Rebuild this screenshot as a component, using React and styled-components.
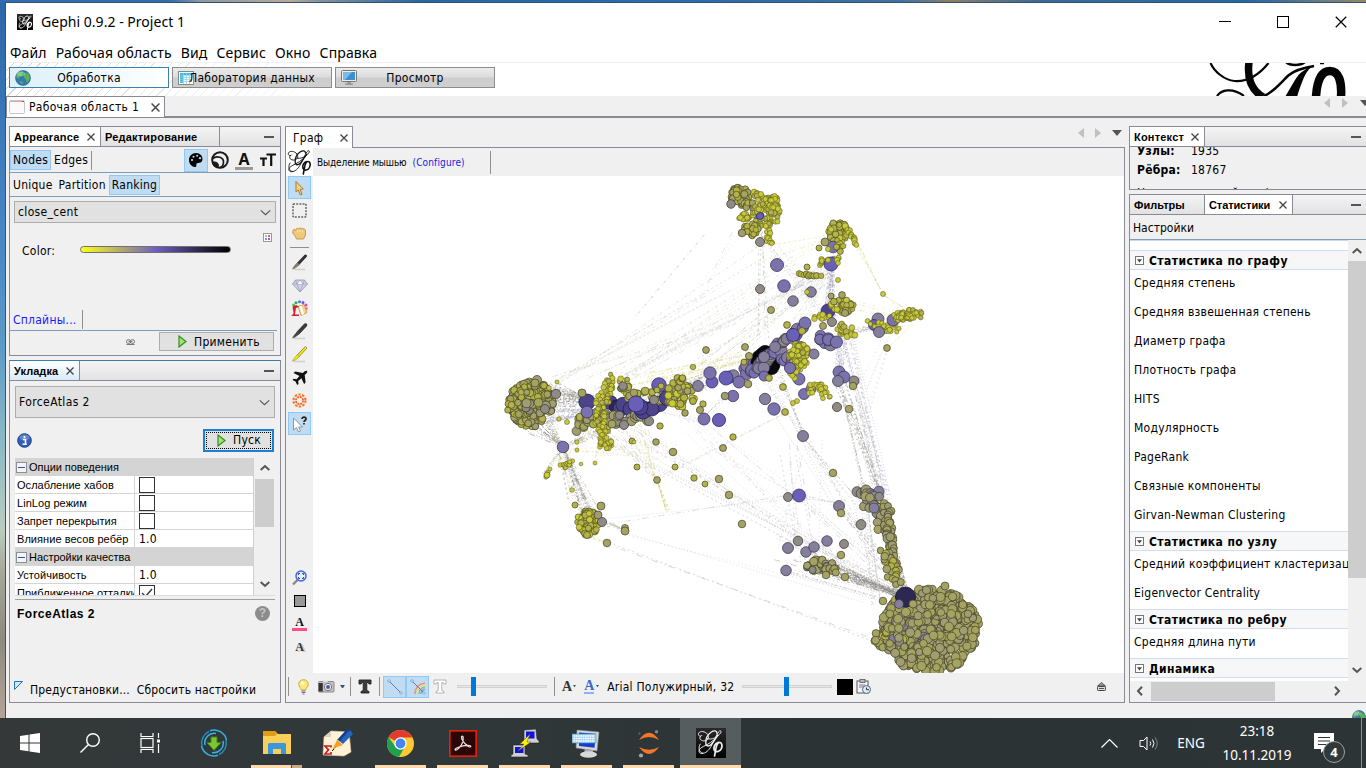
import React from 'react';
import styled, { createGlobalStyle, css } from 'styled-components';

const TAHOMA = '"DejaVu Sans Condensed", "DejaVu Sans", sans-serif';
const SEGOE = '"Noto Sans", "Open Sans", sans-serif';
const ARIAL = '"Liberation Sans", Arial, sans-serif';
const LINE = '#8a8a94';
const BLUE_LINE = '#7f9db9';
const FACE = '#f0f0f0';

const Global = createGlobalStyle`
  *, *::before, *::after { box-sizing: border-box; }
  body { margin: 0; overflow: hidden; }
  svg { display: block; flex: none; }
`;

/* ---------- primitives ---------- */

const Text = styled.span`
  font-family: ${TAHOMA};
  font-size: ${p => p.$size || 12}px;
  letter-spacing: ${p => p.$ls ?? 0.25}px;
  font-weight: ${p => (p.$bold ? 700 : 400)};
  color: ${p => p.$color || '#000'};
  line-height: 16px;
  white-space: nowrap;
`;
const SegoeText = styled(Text)`
  font-family: ${SEGOE};
  letter-spacing: ${p => p.$ls || 0}px;
`;
const ArialText = styled(Text)`
  font-family: ${ARIAL};
  letter-spacing: ${p => p.$ls ?? 0.05}px;
`;
const Grow = styled.div`flex: 1;`;

/* ---------- window frame ---------- */

const Desktop = styled.div`
  width: 1366px;
  height: 768px;
  overflow: hidden;
  display: flex;
  flex-direction: column;
  background:
    linear-gradient(90deg, #2f6db0 0 170px, #8c98a0 200px, #b8a99a 290px, #86909c 320px, #2567a6 420px, #2b6bb0 700px, #41729f 900px, #8a7d6a 950px, #3b6b98 1040px, #2468a8 1250px, #93886a 1366px) top / 100% 3px no-repeat,
    linear-gradient(#2b67a8 0, #3a78bb 120px, #4b89c6 260px, #5d9bc8 350px, #86b6c6 430px, #b9cdbf 530px, #a7a89a 570px, #8d8a80 640px, #b3a596 718px);
`;
const Window = styled.div`
  margin: 2px 0 0 5px;
  height: 716px;
  width: 1361px;
  flex: none;
  border-top: 1px solid #33506e;
  border-left: 1px solid #4a4f58;
  background: ${FACE};
  display: flex;
  flex-direction: column;
`;
const TitleBar = styled.div`
  height: 39px;
  background: #fff;
  display: flex;
  align-items: center;
  padding: 0 18px 1px 11px;
  gap: 8px;
`;
const Controls = styled.div`
  display: flex;
  gap: 46px;
  align-items: center;
  margin-right: 1px;
`;
const MenuBar = styled.div`
  height: 21px;
  background: #fff;
  border-bottom: 1px solid #f0f0f0;
  display: flex;
  align-items: center;
  gap: 9px;
  padding: 1px 0 0 4px;
`;
const Banner = styled.div`
  height: 33px;
  background:
    linear-gradient(90deg, rgba(255,255,255,0), #fff 330px),
    repeating-linear-gradient(135deg, #fff 0 5.4px, #d4d4d4 5.4px 6.2px);
  display: flex;
  align-items: flex-start;
  padding: 4px 12px 0 3px;
  gap: 3px;
`;
const ModeButton = styled.div`
  width: 160px;
  height: 21px;
  border: 1px solid ${p => (p.$on ? '#3c7fb1' : '#8b8b90')};
  background: ${p => (p.$on
    ? 'linear-gradient(90deg, #ddf0f9, #eef9fe 60%, #fff)'
    : 'linear-gradient(#ececec, #dcdcdc 48%, #cdcdcd 52%, #cfcfcf)')};
  display: grid;
  align-items: center;
  padding: 0 5px;
  text-align: center;
  & > * { grid-area: 1 / 1; }
`;
const LogoBox = styled.div`
  height: 33px;
  margin-top: -4px;
`;
const WorkspaceTabs = styled.div`
  height: 22px;
  border-bottom: 2px solid ${LINE};
  display: flex;
  align-items: flex-start;
`;
const WorkspaceTab = styled.div`
  width: 159px;
  height: 21px;
  background: #fff;
  border: 1px solid ${LINE};
  border-bottom: 0;
  display: flex;
  align-items: center;
  padding: 0 4px 0 2px;
  gap: 4px;
`;
const Arrows = styled.div`
  display: flex;
  align-items: center;
  gap: ${p => (p.$wide ? 12 : 11)}px;
  height: 14px;
  margin-right: ${p => (p.$wide ? -4 : 0)}px;
`;
const Body = styled.div`
  flex: 1;
  display: grid;
  grid-template-columns: 272px 840px 244px;
  column-gap: 4px;
  padding: 8px 0 0 3px;
  height: 600px;
`;
const Column = styled.div`
  display: flex;
  flex-direction: column;
  gap: 4px;
  min-width: 0;
`;

/* ---------- panels ---------- */

const Panel = styled.section`
  height: ${p => p.$h}px;
  border: 1px solid ${LINE};
  ${p => p.$active && css`border-top-color: #3f7cad;`}
  display: flex;
  flex-direction: column;
  overflow: hidden;
`;
const TabStrip = styled.div`
  height: 20px;
  flex: none;
  border-bottom: 1px solid ${LINE};
  background: linear-gradient(#f4f4f4, #e2e2e4);
  display: flex;
`;
const Tab = styled.div`
  width: ${p => p.$w}px;
  border-right: 1px solid ${LINE};
  background: ${p => (p.$on ? (p.$focus ? 'linear-gradient(#fff, #d9ebf9)' : '#fff') : 'transparent')};
  display: flex;
  align-items: center;
  justify-content: space-between;
  padding: 1px 5px 0 4px;
`;
const MinButton = styled.div`
  margin: 9px ${p => p.$right || 6}px 0 auto;
  width: 10px;
  height: 2px;
  background: #555;
`;
const ToolRow = styled.div`
  height: ${p => p.$h}px;
  flex: none;
  border-bottom: 1px solid ${BLUE_LINE};
  display: flex;
  align-items: center;
  padding: ${p => p.$pad || '1px 0 0'};
`;
const Chip = styled.div`
  height: 20px;
  padding: 0 2px;
  display: flex;
  align-items: center;
  justify-content: center;
  border: 1px solid ${p => (p.$on ? '#90c8f6' : 'transparent')};
  background: ${p => (p.$on ? '#c0dcf3' : 'transparent')};
  ${p => p.$w && css`width: ${p.$w}px; height: ${p.$h || 23}px; padding: 0;`}
`;
const VLine = styled.div`
  width: 1px;
  height: ${p => p.$h || 19}px;
  background: #8f8f8f;
`;
const Select = styled.div`
  height: ${p => p.$h}px;
  margin: ${p => p.$m};
  border: 1px solid #adadad;
  background: #e1e1e1;
  display: flex;
  align-items: center;
  justify-content: space-between;
  padding: 0 4px 0 3px;
`;
const RankingArea = styled.div`
  display: flex;
  align-items: flex-start;
  padding: 10px 8px 0 12px;
  height: 86px;
`;
const ColorLabel = styled(Text)`margin-top: 10px;`;
const GradientBar = styled.div`
  width: 151px;
  height: 7px;
  margin: 13px 0 0 25px;
  border: 1px solid #707070;
  border-radius: 4px;
  background: linear-gradient(90deg, #ffff14, #6f5fc0 50%, #000);
`;
const SplineRow = styled.div`
  height: 22px;
  border-bottom: 1px solid ${BLUE_LINE};
  margin-right: 3px;
  padding-left: 3px;
  display: flex;
  align-items: center;
  gap: 5px;
`;
const ApplyRow = styled.div`
  display: flex;
  align-items: center;
  justify-content: flex-end;
  gap: 24px;
  padding: 1px 6px 0 0;
`;
const PushButton = styled.div`
  width: ${p => p.$w}px;
  height: ${p => p.$h}px;
  border: ${p => (p.$focus ? '2px solid #1b7fd4' : '1px solid #adadad')};
  background: #e1e1e1;
  display: flex;
  align-items: center;
  justify-content: center;
  gap: 7px;
  padding-left: ${p => (p.$focus ? 1 : 5)}px;
  ${p => p.$focus && css`outline: 1px dotted #000; outline-offset: -4px;`}
`;
const RunRow = styled.div`
  height: 40px;
  padding: 4px 6px 0 7px;
  display: flex;
  align-items: center;
  justify-content: space-between;
`;
const PropSheet = styled.div`
  margin: 0 5px;
  height: 138px;
  flex: none;
  display: flex;
  overflow: hidden;
  border-bottom: 1px solid #ddd;
`;
const PropRows = styled.div`width: 239px; border-right: 1px solid #d0d0d0;`;
const PropHead = styled.div`
  height: 18px;
  background: #d4d4d4;
  display: flex;
  align-items: center;
  gap: 2px;
  padding-left: 1px;
`;
const PropRow = styled.div`
  height: 18px;
  background: #fff;
  border-bottom: 1px solid #d4d4d4;
  display: grid;
  grid-template-columns: 120px 1fr;
`;
const PropCell = styled.div`
  padding-left: ${p => (p.$value ? 4 : 2)}px;
  border-right: ${p => (p.$value ? 0 : 1)}px solid #d4d4d4;
  overflow: hidden;
  display: flex;
  align-items: center;
`;
const Check = styled.div`
  width: 16px;
  height: 16px;
  border: 1px solid #333;
  background: #fff;
`;
const Collapse = styled.div`
  width: 11px;
  height: 11px;
  border: 1px solid #8a8f98;
  background: #f3f4f6;
  display: flex;
  align-items: center;
  justify-content: center;
  &::after { content: ''; width: 7px; height: 1px; background: #35559a; }
`;
const VScroll = styled.div`
  width: ${p => p.$w}px;
  background: ${FACE};
  display: flex;
  flex-direction: column;
  align-items: center;
  justify-content: space-between;
  padding: ${p => p.$pad};
`;
const Thumb = styled.div`
  align-self: stretch;
  height: ${p => p.$h}px;
  background: #cdcdcd;
  margin-bottom: auto;
  margin-top: ${p => p.$mt}px;
`;
const Description = styled.div`
  margin: 3px 5px 0;
  border-top: 1px solid #a0a0a0;
  padding: 6px 5px 0 2px;
  display: flex;
  align-items: flex-start;
  justify-content: space-between;
  height: 82px;
`;
const FooterLinks = styled.div`
  display: flex;
  align-items: flex-start;
  padding: 0 4px;
  gap: 7px;
  & > span { padding-top: 1px; }
`;

/* ---------- graph ---------- */

const GraphTabs = styled.div`
  height: 22px;
  display: flex;
`;
const GraphTab = styled.div`
  width: 68px;
  height: 22px;
  border: 1px solid ${LINE};
  border-bottom: 0;
  background: #fff;
  display: flex;
  align-items: center;
  justify-content: space-between;
  padding: 0 4px 0 7px;
`;
const GraphTabRest = styled.div`
  flex: 1;
  border-bottom: 1px solid ${LINE};
  display: flex;
  justify-content: flex-end;
  padding-right: 3px;
`;
const GraphFrame = styled.div`
  height: 555px;
  border: 1px solid ${LINE};
  border-top: 0;
  display: flex;
  flex-direction: column;
`;
const GraphTop = styled.div`
  height: 28px;
  display: flex;
  align-items: center;
  & > span { padding-top: 1px; }
`;
const GraphMiddle = styled.div`
  display: flex;
  height: 497px;
`;
const Tools = styled.div`
  width: 27px;
  display: flex;
  flex-direction: column;
  align-items: center;
  padding-bottom: 15px;
`;
const Tool = styled.div`
  width: 23px;
  height: 23px;
  flex: none;
  display: flex;
  align-items: center;
  justify-content: center;
  ${p => p.$on && css`background: #c0dcf3; border: 1px solid #90c8f6;`}
`;
const ToolRule = styled.div`
  width: 19px;
  height: 1px;
  margin: 2px 0 3px;
  background: #909090;
`;
const LogoTile = styled.div`
  width: 27px;
  height: 28px;
  background: #fff;
  display: flex;
  align-items: center;
  justify-content: center;
`;
const BottomTools = styled.div`
  flex: 1;
  display: flex;
  align-items: center;
  padding: 0 18px 2px 2px;
`;
const Gap = styled.div`width: ${p => p.$w}px; flex: none;`;
const Slider = styled.div`
  width: ${p => p.$w}px;
  height: 3px;
  border: 1px solid #d2d2d2;
  background: #e7e7e7;
  display: flex;
  align-items: center;
`;
const Knob = styled.div`
  width: 5px;
  height: 19px;
  margin-left: ${p => p.$at}px;
  background: #0078d7;
  flex: none;
`;
const Swatch = styled.div`width: 16px; height: 16px; background: #000;`;

/* ---------- right column ---------- */

const ContextBody = styled.div`
  display: flex;
  flex-direction: column;
  padding-left: 7px;
`;
const ContextRow = styled.div`
  display: grid;
  grid-template-columns: 54px 1fr;
  height: 16px;
  flex: none;
  margin-top: 7px;
  ${p => p.$cut && css`height: 8px; margin-top: 0; overflow: hidden; align-content: center;`}
`;
const ContextTail = styled.div`padding-top: 5px;`;
const StatsBody = styled.div`
  flex: 1;
  display: grid;
  grid-template-columns: 218px 18px;
  grid-template-rows: 441px 20px;
`;
const StatList = styled.div`
  background: #fff;
  border-top: 1px solid #c9d7f1;
  padding-top: 9px;
  overflow: hidden;
`;
const StatHead = styled.div`
  height: 20px;
  background: #f7f7f7;
  border-top: 1px solid #d3dcf5;
  border-bottom: 1px solid #d3dcf5;
  display: flex;
  align-items: center;
  gap: 5px;
  padding: 1px 0 0 5px;
`;
const StatItem = styled.div`
  height: 29px;
  padding: 3px 0 0 4px;
`;
const HScroll = styled.div`
  display: flex;
  align-items: center;
  justify-content: space-between;
  padding: 0 6px 0 5px;
`;
const HThumb = styled.div`
  width: 124px;
  height: 19px;
  background: #cdcdcd;
  margin: 0 auto 0 6px;
`;
const StatusBar = styled.div`
  height: 15px;
  display: flex;
  justify-content: flex-end;
  overflow: hidden;
  padding-top: 7px;
`;

/* ---------- taskbar ---------- */

const Taskbar = styled.footer`
  height: 50px;
  flex: none;
  background: linear-gradient(90deg, #343839, #30383a 30%, #2b3335 60%, #2d3436);
  display: flex;
`;
const TaskItem = styled.div`
  width: ${p => p.$w}px;
  height: 50px;
  flex: none;
  display: flex;
  align-items: center;
  justify-content: center;
  background: ${p => (p.$on ? '#565d5f' : 'transparent')};
  border-bottom: 3px solid ${p => (p.$run ? '#ffd9ae' : 'transparent')};
  padding-top: 3px;
  margin-right: ${p => p.$mr || 0}px;
`;
const StackEdge = styled.div`
  width: 11px;
  height: 3px;
  margin: 47px 10px 0 -11px;
  background: #c9aa89;
  border-left: 1px solid #444;
`;
const Clock = styled.div`
  display: flex;
  flex-direction: column;
  align-items: center;
  gap: 8px;
  width: 74px;
  padding-top: 5px;
`;
const Bell = styled.div`
  position: relative;
  width: 34px;
  height: 32px;
  margin-top: 14px;
`;
const Badge = styled.div`
  position: absolute;
  left: 9px;
  top: 9px;
  width: 22px;
  height: 22px;
  border: 1px solid #9ba0a2;
  border-radius: 50%;
  background: #30383a;
  display: flex;
  align-items: center;
  justify-content: center;
`;

/* ---------- icons ---------- */

const Close = ({ s = 8, c = '#444', w = 1.3 }) => (
  <svg width={s} height={s} viewBox="0 0 8 8"><path d="M.5.5l7 7M7.5.5l-7 7" stroke={c} strokeWidth={w} fill="none" /></svg>
);
const Chevron = ({ dir = 'down', w = 10, c = '#555', sw = 2 }) => {
  const r = { down: 0, up: 180, left: 90, right: -90 }[dir];
  return (
    <svg width={w} height={w} viewBox="0 0 10 10">
      <path d="M.7 3l4.3 4 4.3-4" transform={`rotate(${r} 5 5)`} stroke={c} strokeWidth={sw} fill="none" />
    </svg>
  );
};
const GephiMark = ({ size = 26, c = '#111', w = 0.9 }) => (
  <svg width={size} height={size} viewBox="0 0 26 26" fill="none" stroke={c} strokeWidth={w} strokeLinecap="round">
    <path d="M4.500 6C3.500 7.500 1 6.500 1.300 4.500 1.800 2 6 1.500 9 4c3 2.500 2 6.500-1.500 7S1 9 3.500 6.500" />
    <path d="M18.500 4C18.500 1.500 16 1 13 3 9.500 5.500 7.800 10 8.200 13.500c.3 3 3.300 3 5.800 0 2.200-2.700 4-6 5.500-8" strokeWidth={w * 1.4} />
    <path d="M9.500 9c4 1.500 10-1.500 12.500-5.500 1-2-.5-2.500-2-.8-2 3-4.500 9-7 13.500-2 3.700-5 6.500-8.500 6.500-3 0-3.500-3-1-5s8-3.500 12-7.500" />
    <path d="M3 14c-2 3-1.500 8 2.500 8.500" />
    <path d="M19.500 12.500c-3 1-4.500 4.500-3.500 7 1.200 2.500 5 2 6.500-1 1.500-3.200.5-6-1.500-6s-3 3-3.600 6.500L16.300 25" strokeWidth={w * 1.8} />
  </svg>
);
const BigLogo = () => (
  <svg width="146" height="33" viewBox="1208 63 146 33" fill="none" stroke="#050505">
    <path d="M1210.500 63c4 9 14 17 24 18 15 1 26-8 34-18" strokeWidth="2.200" />
    <path d="M1249 62c-2 16 2 28 14 35" strokeWidth="7.500" />
    <path d="M1217 96c4-6 15-9 27 0" strokeWidth="2.200" />
    <path d="M1264 96c10-4 18-15 25-21 6-5 13-7 25-9" strokeWidth="2.500" />
    <path d="M1285 97l10-17c5-8 10-11 18-14-6 4-9 9-16 31z" fill="#050505" stroke="none" />
    <path d="M1286 62c4 4 14 4 19 0" strokeWidth="2.500" />
    <path d="M1320 63l4 0" strokeWidth="2.500" />
    <path d="M1316 97c1-17 6-26 14-26 9 0 12 11 11 26" strokeWidth="8.500" />
  </svg>
);
const NavArrows = ({ wide }) => (
  <Arrows $wide={wide}>
    <svg width="6" height="10" viewBox="0 0 6 10"><path d="M6 0v10L0 5z" fill="#c0c0c0" /></svg>
    <svg width="6" height="10" viewBox="0 0 6 10"><path d="M0 0v10l6-5z" fill="#c0c0c0" /></svg>
    <svg width="10" height="6" viewBox="0 0 10 6"><path d="M0 0h10L5 6z" fill="#555" /></svg>
  </Arrows>
);
const Globe = ({ s = 16 }) => (
  <svg width={s} height={s} viewBox="0 0 16 16">
    <circle cx="8" cy="8" r="7.500" fill="#3478b8" stroke="#285d91" strokeWidth=".6" />
    <path d="M2 4c2-2 4-3 6-2.500 1 1-1 2-1 3.500S4 6 4 8 1.500 8 1 6zM9 3c3-1 5 1 5.500 3 1 2-.5 5-2 6.500-1.500 0-1-3-2.500-4S9 5 9 3zM5 11c2-.5 3 1 3 3-2 .5-3-1-3-3z" fill="#56b54c" />
    <ellipse cx="6" cy="4" rx="4" ry="2.500" fill="#fff" opacity=".3" />
  </svg>
);
const TableIcon = () => (
  <svg width="16" height="16" viewBox="0 0 16 16">
    <rect x=".5" y="1.500" width="15" height="13" fill="#fff" stroke="#888" />
    <path d="M2 3h12v2H2zM2 3h3v10H2z" fill="#38bce8" />
    <path d="M2 5.500h12M2 7.500h12M2 9.500h12M2 11.500h12M5.500 3v11M8.500 3v11M11.500 3v11" stroke="#8ccfe6" strokeWidth=".7" />
  </svg>
);
const MonitorIcon = () => (
  <svg width="16" height="15" viewBox="0 0 16 15">
    <rect x=".5" y=".5" width="15" height="11" rx="1" fill="#eee" stroke="#777" />
    <rect x="2" y="2" width="12" height="8" fill="#3b8ed0" />
    <path d="M2 2h9L4 10H2z" fill="#7bbbe8" />
    <path d="M6 12h4v1.500h2V15H4v-1.500h2z" fill="#999" />
  </svg>
);
const PageIcon = () => (
  <svg width="16" height="14" viewBox="0 0 16 14">
    <rect x=".5" y=".5" width="15" height="13" rx="1" fill="#fbf9f9" stroke="#c8c6c6" />
    <path d="M1 1.500h14" stroke="#d9a9ae" /><path d="M13 1.500h2" stroke="#d33" />
  </svg>
);
const Palette = () => (
  <svg width="14" height="14" viewBox="0 0 14 14">
    <path d="M7 0C3 0 0 3 0 7s3 7 6 7c2 0 1-2 1.500-3.200S10 10 11.500 9.500C15 8 14 0 7 0z" fill="#050505" />
    <g fill="#c0dcf3"><circle cx="3" cy="7" r="1.100" /><circle cx="4.500" cy="3.700" r="1" /><circle cx="8.200" cy="2.800" r="1" /><circle cx="11" cy="5.200" r="1.100" /></g>
  </svg>
);
const Rings = () => (
  <svg width="18" height="18" viewBox="0 0 18 18" fill="none" stroke="#1a1a1a">
    <circle cx="9" cy="9" r="7.800" strokeWidth="2" />
    <path d="M1.500 7.500C6 4 13 6.500 12.500 11.500c-.2 2.500-1.500 4.500-4 5.300" strokeWidth="1.700" />
    <path d="M1 11c3.500-1.500 7 .5 7 3.500 0 1.200-.8 2-2 2.500-2.500-.5-5-3-5-6z" fill="#1a1a1a" stroke="none" />
  </svg>
);
const SizeT = () => (
  <svg width="16" height="14" viewBox="0 0 16 14" fill="none" stroke="#111" strokeWidth="2.200">
    <path d="M6.500 1.500H16M11.200 1.500V13M0 5.500h7M3.500 5.500V13" />
  </svg>
);
const LetterBar = styled.div`
  width: ${p => p.$w || 18}px;
  height: ${p => p.$w || 19}px;
  display: flex;
  justify-content: center;
  align-items: flex-start;
  border-bottom: ${p => p.$bar};
  font: 700 ${p => p.$size || 18}px/${p => p.$lh || 16}px ${p => p.$font || SEGOE};
  color: #111;
`;
const Play = () => (
  <svg width="9" height="13" viewBox="0 0 9 13">
    <path d="M1 1v11l7-5.500z" fill="#a7e07a" stroke="#2f8f1c" strokeWidth="1.200" />
  </svg>
);
const Dice = () => (
  <svg width="9" height="9" viewBox="0 0 9 9">
    <rect x=".5" y=".5" width="8" height="8" fill="#fff" stroke="#999" />
    <path d="M2 2h2v2H2z" fill="#9c9" /><path d="M5 2h2v2H5z" fill="#e45a5a" /><path d="M2 5h2v2H2z" fill="#6b9ef0" /><path d="M5 5h2v2H5z" fill="#c44bd0" />
  </svg>
);
const Chain = () => (
  <svg width="9" height="6" viewBox="0 0 9 6" fill="none" stroke="#777">
    <rect x=".5" y=".8" width="4.200" height="3.500" rx="1.500" /><rect x="4.300" y=".8" width="4.200" height="3.500" rx="1.500" /><path d="M2.500 2.600h4M.5 5.500h8" />
  </svg>
);
const Info = () => (
  <svg width="15" height="15" viewBox="0 0 15 15">
    <circle cx="7.500" cy="7.500" r="6.800" fill="#2f5fb8" stroke="#1c3f86" />
    <ellipse cx="7.500" cy="4.500" rx="5" ry="3" fill="#fff" opacity=".25" />
    <path d="M6 6.500h2.500v4.500M5.500 11.200h4.300M7.500 3v2" stroke="#fff" strokeWidth="1.600" fill="none" />
  </svg>
);
const CornerMark = () => (
  <svg width="9" height="9" viewBox="0 0 9 9"><path d="M.5.5h8l-8 8z" fill="#cfe7f7" stroke="#2274b5" /></svg>
);
const CursorIcon = ({ help }) => (
  <svg width="16" height="16" viewBox="0 0 16 16">
    {help
      ? <><path d="M1.500 2v12l3-2.500L6.500 16l2-1-1.800-4h3.800z" fill="#fff" stroke="#8a96a2" /><path d="M10 3c0-2.500 4-2.500 4 0 0 1.500-2 1.500-2 3M12 7v1.500" stroke="#222" strokeWidth="1.700" fill="none" /></>
      : <path d="M4 1.500v10.500l2.300-2 2 5 1.800-.8-2-4.700 3.200-.5z" fill="#f5d07a" stroke="#a67d35" />}
  </svg>
);
const Marquee = () => (
  <svg width="15" height="15" viewBox="0 0 15 15"><rect x="1" y="1" width="13" height="13" fill="none" stroke="#222" strokeDasharray="2 1.200" /></svg>
);
const Hand = () => (
  <svg width="15" height="13" viewBox="0 0 15 13">
    <path d="M1 3c1.500-1 2.500-.5 3 .5C4 1 6 .5 7 2c1-1.500 3-1 3 0 1.500-.5 3 0 3.500 1.500V8l-2 4H4.500L3 8.500.8 6.500z" fill="#efc978" stroke="#c09240" strokeWidth=".9" />
    <path d="M5.500 3v2M8 3v2M10.500 3.500v2" stroke="#fff0c0" strokeWidth=".8" />
  </svg>
);
const Stroke = ({ body, tip, w = 3 }) => (
  <svg width="17" height="17" viewBox="0 0 17 17">
    <path d="M3 15.500h11" stroke="#d0d0d0" strokeWidth="1.500" />
    <path d="M14.500 2L7 10" stroke="#333" strokeWidth={w + 0.4} strokeLinecap="round" />
    <path d="M14.500 2L7 10" stroke={body} strokeWidth={w} strokeLinecap="round" />
    <path d="M6.500 8.500l2 2C6 13 4 14.500 1.500 15.200c.6-2.200 2.500-4.200 5-6.700z" fill={tip} stroke="#666" strokeWidth=".4" />
  </svg>
);
const Diamond = () => (
  <svg width="16" height="14" viewBox="0 0 16 14">
    <path d="M3.500 1h9L15.500 5 8 13 .5 5z" fill="#cfd2e6" stroke="#9094b3" strokeWidth=".8" />
    <path d="M.5 5h15M5 5l3 8 3-8M3.500 1L5 5l3-4 3 4 1.500-4" fill="none" stroke="#9a9ebd" strokeWidth=".7" />
    <path d="M5.500 5h5L8 1.500z" fill="#f5f6ff" />
  </svg>
);
const Bucket = () => (
  <svg width="17" height="17" viewBox="0 0 17 17">
    <g><circle cx="5" cy="2.700" r="1.500" fill="#26b04a" /><circle cx="8.500" cy="1.800" r="1.500" fill="#3a7be0" /><circle cx="12" cy="2.500" r="1.500" fill="#7c4be0" /><circle cx="15" cy="5" r="1.500" fill="#d048c8" /><circle cx="15.500" cy="8.500" r="1.300" fill="#ef6a9c" /><circle cx="2.500" cy="5" r="1.500" fill="#42cf55" /></g>
    <path d="M7 6.500l6-2 3 8-6 3z" fill="#f6d38c" stroke="#b98730" strokeWidth=".7" />
    <path d="M8 6.500l2.500-1 2.500 8.500-2 1z" fill="#fff" />
    <path d="M1.500 7C3 4.500 7 5 8 7L5 8l-1 6.500h4V16H.5c0-1.500 2-1 2-3.500z" fill="#d5252c" />
  </svg>
);
const Plane = () => (
  <svg width="16" height="16" viewBox="0 0 16 16">
    <path d="M15 1.200c-1.200-1-2.700.3-4 1.700L3.300 1.600 1.500 3l6 3-3 3.200-3-.4-1 1.200 3 1.600L5.200 15l1.300-1-.3-3 3.200-2.800 2.700 5.800 1.500-1.600L12.700 5c1.400-1.300 3.300-2.900 2.300-3.800z" fill="#111" />
  </svg>
);
const Gear = () => (
  <svg width="15" height="15" viewBox="0 0 15 15" fill="none">
    <circle cx="7.500" cy="7.500" r="6" stroke="#f47a30" strokeWidth="2.200" strokeDasharray="2.400 1.370" />
    <circle cx="7.500" cy="7.500" r="3.600" stroke="#f05a1a" strokeWidth="1.600" strokeDasharray="2 .8" />
  </svg>
);
const ZoomFit = () => (
  <svg width="15" height="16" viewBox="0 0 15 16">
    <path d="M6 9.500l-5 5" stroke="#8a8a8a" strokeWidth="2.400" />
    <circle cx="9" cy="6" r="5" fill="#e5edff" stroke="#3f68d6" strokeWidth="1.500" />
    <path d="M6.500 5V3.500H8M10 3.500h1.500V5M11.500 7v1.500H10M8 8.500H6.500V7" stroke="#2448c0" fill="none" />
  </svg>
);
const SquareIcon = () => (
  <svg width="12" height="12" viewBox="0 0 12 12"><rect x=".5" y=".5" width="11" height="11" fill="#999" stroke="#000" /></svg>
);
const Bulb = () => (
  <svg width="11" height="16" viewBox="0 0 11 16">
    <path d="M5.500.7C2.500.7.700 3 .700 5.200.7 8 3 8.500 3.300 11h4.400C8 8.500 10.300 8 10.300 5.200 10.300 3 8.500.7 5.500.7z" fill="#fbe87a" stroke="#c9a536" strokeWidth=".9" />
    <path d="M3.500 12h4M3.500 13.500h4M4.500 15h2" stroke="#777" strokeWidth="1.200" />
    <ellipse cx="4.500" cy="4" rx="1.800" ry="2" fill="#fff" opacity=".8" />
  </svg>
);
const Camera = () => (
  <svg width="17" height="13" viewBox="0 0 17 13">
    <rect x=".5" y="1.500" width="15.500" height="10.500" rx="1" fill="#c4c4c4" stroke="#888" />
    <rect x=".8" y="3" width="4" height="8.500" fill="#333" />
    <path d="M5 .5h5v1.500H5z" fill="#ddd" /><circle cx="10" cy="7" r="3.700" fill="#eee" stroke="#777" /><circle cx="10" cy="7" r="2" fill="#4a5d9c" />
  </svg>
);
const EdgeIcon = ({ rainbow }) => (
  <svg width="16" height="16" viewBox="0 0 16 16" fill="none">
    {rainbow && <><path d="M5 15C5 9 9 5 15 4" stroke="#ef8d91" strokeWidth="1.600" /><path d="M7 15c0-5 3-8 8-9" stroke="#f0df79" strokeWidth="1.600" /><path d="M9 15c0-4 2-6 6-7" stroke="#7fce89" strokeWidth="1.600" /><path d="M11 15c0-3 1.500-4 4-5" stroke="#8f9ee8" strokeWidth="1.600" /></>}
    <path d="M2 2l12 12" stroke="#587fb4" /><circle cx="2" cy="2" r="1.200" fill="#fff" stroke="#5b88c0" strokeWidth=".7" /><circle cx="14" cy="14" r="1.200" fill="#fff" stroke="#5b88c0" strokeWidth=".7" />
  </svg>
);
const Slab = ({ hollow }) => (
  <svg width="14" height="15" viewBox="0 0 14 15">
    <path d="M1 1h12v4h-2l-1-1.500H8.800v8L11 12.500V14H3v-1.500l2.200-1v-8H4L3 5H1z" fill={hollow ? '#fff' : '#3b3b3b'} stroke={hollow ? '#aaa' : '#222'} strokeWidth=".9" />
  </svg>
);
const Caret = ({ w = 4 }) => (
  <svg width={w} height={w * 0.75} viewBox="0 0 4 3"><path d="M0 0h4L2 3z" fill="#3e526b" /></svg>
);
const LetterA = styled.span`
  font: 700 ${p => p.$size || 14}px/16px "Liberation Serif", serif;
  color: ${p => p.$c};
  border-bottom: ${p => (p.$u ? '2px solid #8fb0ef' : '0')};
  text-shadow: ${p => (p.$shade ? '2px 1px 0 #c8c8c8' : 'none')};
  ${p => p.$u && css`line-height: 12px;`}
`;
const Clipboard = () => (
  <svg width="16" height="16" viewBox="0 0 16 16">
    <rect x="1" y="2" width="11" height="12" fill="#f5f5f5" stroke="#555" /><rect x="4" y=".5" width="5" height="3" fill="#bbb" stroke="#555" strokeWidth=".8" />
    <path d="M3 6h6M3 8h4" stroke="#778" /><circle cx="10.500" cy="10.500" r="4" fill="#dfe9f4" stroke="#4d6b8c" /><path d="M10.500 8.500v2.200H13" stroke="#334" fill="none" />
  </svg>
);
const Eject = () => (
  <svg width="9" height="9" viewBox="0 0 9 9"><path d="M4.500.5l4 3.500h-8z" fill="#999" stroke="#444" strokeWidth=".8" /><rect x=".5" y="4.500" width="8" height="4" rx=".8" fill="#ddd" stroke="#444" /><path d="M2 6.500h5" stroke="#555" /></svg>
);
const HelpDot = styled.div`
  width: 15px;
  height: 15px;
  border-radius: 50%;
  background: #8c8c8c;
  color: #c4c4c4;
  font: 700 12px/15px ${ARIAL};
  text-align: center;
`;
const Toggle = () => (
  <svg width="9" height="9" viewBox="0 0 9 9"><rect x=".5" y=".5" width="8" height="8" fill="#fff" stroke="#777" /><path d="M2 3.200h5L4.500 6.500z" fill="#444" /></svg>
);

/* ---------- graph drawing ---------- */

function makeRandom(seed) {
  let s = seed;
  return () => {
    s = (s * 1664525 + 1013904223) % 4294967296;
    return s / 4294967296;
  };
}
const TONES = {
  y: ['#c9c93c', '#5a5a1c'], l: ['#b4b34b', '#4c4c1c'], o: ['#a5a362', '#47462a'], k: ['#a09e70', '#3d3c2c'],
  g: ['#8f8a84', '#3b3838'], m: ['#857f9c', '#38344a'], p: ['#7a72ac', '#332d56'], v: ['#6a5fb6', '#2b2560'],
  d: ['#4c438c', '#1f1a45'], n: ['#2d2852', '#151230'], b: ['#0a0a12', '#000000'],
};
const rnd = makeRandom(77);

/* nodes scattered evenly inside an ellipse */
const blob = (cx, cy, rx, ry, n, r, tones) =>
  Array.from({ length: n }, () => {
    const a = rnd() * Math.PI * 2;
    const d = Math.sqrt(rnd());
    return [cx + Math.cos(a) * d * rx, cy + Math.sin(a) * d * ry, r * (0.88 + rnd() * 0.24), tones[Math.floor(rnd() * tones.length)]];
  });

/* nodes scattered along a polyline */
const strand = (pts, n, sp, r, tones) =>
  Array.from({ length: n }, (_, i) => {
    const t = ((i + 0.5) / n) * (pts.length - 1);
    const k = Math.min(Math.floor(t), pts.length - 2);
    const f = t - k;
    return [
      pts[k][0] * (1 - f) + pts[k + 1][0] * f + (rnd() - 0.5) * sp,
      pts[k][1] * (1 - f) + pts[k + 1][1] * f + (rnd() - 0.5) * sp,
      r * (0.9 + rnd() * 0.2), tones[Math.floor(rnd() * tones.length)],
    ];
  });

const BACK = [
  ...blob(531, 404, 22, 23, 210, 3.6, 'looolk'),
  ...blob(524, 406, 17, 20, 60, 3.2, 'llo'),
  ...blob(537, 405, 14, 12, 8, 4.3, 'gko'),
  [537, 380, 4.5, 'k'], [556, 394, 4.7, 'g'], [545, 409, 4.5, 'g'], [535, 383, 4, 'o'],
  ...blob(588, 523, 11, 13, 70, 3, 'lly'),
  [601, 506, 4, 'o'], [602, 522, 4.6, 'g'], [598, 515, 4, 'k'], [587, 535, 3.5, 'l'],
  [759, 216, 5, 'v'],
  ...blob(740, 196, 9, 9, 45, 3.3, 'lo'), ...strand([[745, 204], [752, 206]], 8, 8, 3.3, 'lo'),
  ...blob(772, 206, 9, 11, 50, 2.6, 'yyl'),
  ...strand([[752, 196], [766, 198], [776, 206], [773, 222], [760, 223], [742, 217], [755, 209], [764, 203]], 80, 9, 2.6, 'yyl'),
  ...blob(751, 230, 8, 6, 26, 3, 'l'), ...strand([[768, 231], [770, 245]], 12, 5, 2.4, 'y'),
  [731, 204, 4.3, 'g'], [760, 242, 4.5, 'g'], [742, 233, 3.8, 'k'], [760, 216, 3.6, 'v'],
  ...blob(838, 232, 10, 10, 60, 3, 'lly'), ...strand([[848, 228], [857, 245]], 12, 3, 2.6, 'y'),
];
const CORE = [
  ...strand([[577, 427], [590, 419], [600, 416], [618, 420]], 34, 14, 4.1, 'olk'),
  [587, 402, 8, 'd'], [587, 412, 6, 'p'],
  ...strand([[608, 404], [620, 406], [632, 408], [653, 406], [670, 398]], 10, 6, 7.5, 'ddn'),
  ...strand([[601, 418], [622, 419], [650, 418]], 20, 8, 4.6, 'kog'),
  ...strand([[613, 380], [606, 390], [603, 402], [599, 414], [603, 427], [605, 443]], 75, 12, 2.5, 'yyl'),
  ...blob(606, 443, 6, 6, 20, 2.4, 'y'),
  ...strand([[622, 380], [627, 392]], 12, 9, 2.6, 'yl'),
  ...strand([[620, 394], [642, 393], [664, 396], [686, 391]], 28, 15, 3.7, 'oll'),
  [659, 385, 7.3, 'v'], [667, 398, 7.5, 'd'], [643, 411, 8, 'd'], [652, 409, 7, 'd'], [640, 407, 8, 'd'], [636, 404, 8, 'v'],
  [661, 386, 3, 'l'], [657, 390, 3, 'l'],
  ...blob(680, 396, 15, 12, 52, 3.3, 'lloy'), ...strand([[675, 381], [684, 379]], 7, 5, 3.2, 'l'),
  [654, 400, 4.5, 'g'], [624, 425, 4.5, 'g'], [612, 424, 4, 'o'], [623, 386, 4.2, 'g'],
  ...strand([[725, 380], [745, 371], [758, 367], [770, 361]], 12, 8, 5.8, 'mmpp'),
  [698, 386, 5.5, 'm'], [712, 382, 6, 'v'], [710, 373, 6.2, 'p'], [726, 378, 7, 'v'], [733, 396, 5.7, 'p'], [739, 382, 6, 'p'],
  ...blob(766, 360, 10, 9, 14, 6.5, 'b'), [772, 368, 6.5, 'b'],
  ...strand([[757, 366], [766, 358], [777, 350], [790, 336], [803, 326]], 24, 6, 5.8, 'mmmgp'),
  ...strand([[748, 373], [758, 370], [764, 368]], 5, 5, 5.6, 'mmp'),
  [764, 376, 5, 'p'], [764, 357, 5.6, 'm'], [775, 347, 5.5, 'm'],
  ...strand([[780, 361], [793, 359], [802, 350]], 9, 8, 5.6, 'mp'),
  [793, 335, 6.6, 'v'], [805, 323, 6, 'p'], [802, 331, 3.5, 'l'], [791, 366, 6, 'p'], [799, 379, 6, 'p'],
  ...strand([[818, 336], [826, 342], [835, 341]], 9, 10, 5.5, 'mpg'),
  ...blob(799, 356, 10, 13, 68, 2.7, 'yly'), ...strand([[800, 365], [791, 378]], 18, 8, 2.6, 'y'), [790, 368, 5.6, 'p'],
  [804, 394, 5.5, 'p'], [811, 389, 5, 'm'], ...strand([[811, 390], [821, 386], [827, 397]], 28, 11, 2.5, 'y'),
  [793, 403, 2.5, 'y'], [797, 401, 2.5, 'y'], [814, 354, 5, 'm'],
  [833, 247, 5.8, 'p'], ...strand([[818, 264], [824, 260], [841, 258]], 12, 4, 2.6, 'y'), [831, 264, 7, 'v'], [837, 260, 2.7, 'y'], [828, 260, 2.5, 'y'],
  ...blob(840, 248, 4, 4, 7, 3, 'yl'), [819, 248, 3, 'l'], [828, 249, 2.6, 'y'], [825, 242, 4, 'o'],
  [828, 311, 7, 'd'], ...blob(843, 306, 12, 7, 36, 3, 'lyl'), ...strand([[815, 316], [829, 318]], 10, 6, 2.6, 'y'), [845, 313, 3.6, 'o'],
  [832, 322, 4.5, 'g'], [823, 326, 3.5, 'o'],
  ...strand([[796, 274], [806, 274], [813, 277], [822, 275]], 10, 3, 3, 'l'), [807, 267, 3, 'l'],
  ...strand([[838, 332], [846, 328], [855, 335]], 19, 9, 2.8, 'yl'),
  [878, 319, 6, 'm'], [874, 325, 5.5, 'v'],
  ...strand([[869, 323], [884, 327], [893, 330], [899, 318]], 25, 8, 2.4, 'y'), [879, 332, 5.5, 'm'], [893, 320, 6, 'p'],
  ...strand([[896, 317], [907, 315], [920, 313]], 46, 9, 2.4, 'yyl'),
  ...strand([[560, 463], [566, 467], [571, 463]], 12, 6, 2.2, 'y'), [546, 477, 2.2, 'y'], [548, 472, 2.2, 'y'], [550, 469, 2, 'y'], [547, 475, 3, 'y'],
  [563, 447, 5.8, 'p'],
];
const FREE = [
  [777, 265, 6.5, 'p'], [784, 286, 6.3, 'p'], [793, 301, 5.3, 'm'], [811, 292, 5.3, 'm'], [807, 292, 2.5, 'y'], [760, 289, 4.5, 'g'],
  [771, 310, 3.5, 'o'], [787, 325, 3.4, 'l'], [745, 347, 3.5, 'o'], [706, 350, 3.4, 'o'], [749, 356, 3.6, 'o'], [693, 367, 2.8, 'l'], [744, 362, 3, 'l'],
  [838, 263, 2.4, 'y'], [842, 295, 3.4, 'o'], [831, 296, 3, 'o'], [838, 280, 2.5, 'y'], [883, 294, 2.5, 'y'], [887, 348, 3.4, 'o'],
  [839, 372, 6, 'p'], [844, 377, 6, 'p'], [838, 381, 5.5, 'm'], [854, 381, 5, 'g'], [853, 386, 3.8, 'o'], [837, 407, 4.6, 'g'], [849, 409, 3.8, 'o'],
  [765, 399, 5.7, 'm'], [774, 409, 6.2, 'p'], [785, 412, 3.4, 'l'], [783, 387, 3.4, 'l'], [769, 378, 3.4, 'l'], [748, 384, 3.8, 'o'],
  [725, 396, 3.8, 'k'], [704, 419, 6, 'p'], [719, 420, 6.6, 'v'], [803, 436, 5.5, 'm'], [733, 437, 3.2, 'l'], [723, 448, 3.5, 'o'],
  [693, 401, 3.4, 'l'], [703, 404, 3.2, 'l'], [700, 410, 3.6, 'o'], [685, 413, 3.3, 'o'], [660, 426, 3.2, 'l'], [632, 441, 3, 'l'], [634, 442, 2, 'y'],
  [656, 442, 3.3, 'o'], [673, 452, 3.8, 'o'], [675, 467, 3, 'l'], [657, 480, 3.4, 'o'], [637, 467, 3, 'l'], [694, 478, 3.2, 'l'], [705, 484, 3, 'l'],
  [719, 479, 3.8, 'o'], [729, 495, 3.8, 'o'], [742, 524, 3.8, 'o'], [607, 543, 3.8, 'o'], [625, 528, 3.5, 'o'], [625, 531, 4, 'o'],
  [788, 497, 4.5, 'g'], [799, 495.5, 6.5, 'v'], [839, 506, 5.5, 'm'], [841, 513, 3.8, 'o'], [833, 473, 3.8, 'o'], [861, 524.5, 5, 'g'],
  [788, 548, 5.5, 'm'], [798, 541, 4.8, 'g'], [806, 552, 5.3, 'm'], [814, 547, 5.3, 'm'], [827, 541, 5.3, 'm'], [844, 544, 4.5, 'g'], [841, 555, 3.8, 'o'],
  [786, 570.5, 5.3, 'm'], [567, 422, 2.5, 'y'], [557, 382, 2, 'y'], [582, 393, 4, 'o'], [595, 463, 2, 'y'], [581, 464, 1.8, 'y'], [577, 450, 2, 'y'], [572, 490, 2.3, 'y'], [575, 505, 3, 'l'],
  [577, 442, 2.2, 'y'], [559, 419, 2.2, 'y'], [549, 388, 2.3, 'y'],
  [826, 575, 3.8, 'o'], [845, 577, 3.8, 'o'], [883, 601, 3.8, 'o'],
];
const LOWER = [
  ...blob(815, 566, 9, 7, 22, 3.9, 'okg'), ...strand([[822, 562], [838, 573]], 12, 8, 3.6, 'ok'),
  ...strand([[858, 494], [866, 492], [878, 493]], 8, 5, 4.8, 'gkm'), ...strand([[866, 500], [875, 503], [882, 516], [884, 527]], 28, 13, 4.3, 'okgo'),
  ...strand([[885, 505], [888, 519], [889, 532], [891, 546], [893, 560], [896, 574]], 46, 9, 3.8, 'ook'),
  ...strand([[884, 551], [891, 570], [896, 584]], 16, 12, 3.6, 'ol'), [874, 508, 5, 'm'],
  ...blob(930, 630, 49, 42, 480, 4.2, 'oookk'), ...blob(890, 640, 16, 14, 26, 3.9, 'olk'), ...blob(912, 634, 28, 22, 16, 4.6, 'mg'), ...blob(930, 630, 47, 41, 110, 4.2, 'oook'),
  [945, 586, 4, 'o'], [905.5, 597, 10, 'n'], [899, 604, 4.5, 'm'], [913, 604, 4, 'o'],
];
const EDGE_TONE = { y: '#dbd98a', o: '#adad90', g: '#8b8882', b: '#a6a6be', x: '#c8c8c8' };
/* [x1, y1, x2, y2, spread at start, spread at end, count, tone, opacity] */
const BUNDLES = [
  [548, 395, 592, 401, 26, 12, 44, 'g', 0.65], [548, 415, 592, 412, 20, 8, 30, 'b', 0.65], [540, 422, 563, 447, 26, 3, 30, 'g', 0.7],
  [563, 447, 592, 518, 3, 22, 30, 'g', 0.55], [563, 447, 545, 475, 2, 6, 6, 'o', 0.8], [563, 447, 600, 428, 3, 14, 14, 'g', 0.5], [559, 453, 572, 500, 2, 8, 8, 'o', 0.5],
  [555, 380, 720, 310, 14, 60, 9, 'o', 0.35], [600, 390, 800, 275, 30, 40, 12, 'o', 0.35], [635, 315, 706, 232, 6, 4, 1, 'g', 0.5],
  [557, 381, 766, 250, 6, 20, 2, 'g', 0.3], [580, 400, 825, 268, 20, 14, 6, 'b', 0.3], [700, 370, 825, 275, 30, 24, 12, 'o', 0.45],
  [640, 385, 770, 350, 24, 16, 16, 'y', 0.7], [760, 220, 762, 345, 4, 14, 4, 'g', 0.4], [735, 235, 690, 300, 8, 30, 3, 'g', 0.25],
  [762, 230, 835, 330, 12, 24, 8, 'b', 0.45], [831, 264, 829, 320, 6, 14, 22, 'b', 0.7], [800, 290, 828, 260, 14, 8, 8, 'b', 0.5],
  [848, 235, 790, 340, 14, 30, 8, 'o', 0.4], [770, 260, 830, 235, 40, 8, 8, 'y', 0.5], [852, 234, 883, 294, 8, 2, 4, 'y', 0.8], [883, 294, 905, 312, 2, 8, 4, 'y', 0.8],
  [835, 300, 900, 316, 16, 8, 6, 'y', 0.5], [850, 332, 900, 322, 8, 10, 10, 'g', 0.5], [840, 345, 840, 378, 14, 10, 20, 'b', 0.6],
  [840, 380, 873, 492, 12, 18, 14, 'g', 0.55], [846, 330, 884, 500, 14, 16, 12, 'b', 0.6], [855, 400, 893, 545, 10, 14, 7, 'g', 0.5],
  [775, 365, 803, 436, 8, 4, 5, 'g', 0.6], [803, 436, 862, 505, 4, 20, 5, 'g', 0.45], [760, 372, 840, 500, 20, 20, 7, 'x', 0.8],
  [893, 320, 862, 390, 6, 10, 3, 'o', 0.4], [915, 318, 888, 348, 8, 2, 3, 'y', 0.5], [887, 348, 852, 460, 2, 6, 2, 'o', 0.4],
  [600, 430, 905, 597, 30, 12, 5, 'x', 0.9], [615, 420, 860, 575, 20, 30, 6, 'g', 0.35], [690, 420, 835, 570, 40, 20, 5, 'b', 0.4],
  [590, 523, 799, 496, 12, 6, 3, 'b', 0.4], [607, 543, 880, 645, 6, 8, 2, 'x', 0.9], [625, 532, 880, 615, 6, 30, 2, 'x', 0.7], [598, 520, 625, 530, 8, 4, 7, 'o', 0.7], [590, 535, 607, 543, 6, 3, 4, 'y', 0.8],
  [610, 425, 657, 480, 20, 3, 7, 'o', 0.5], [657, 481, 668, 511, 2, 5, 12, 'y', 1], [640, 430, 655, 478, 20, 4, 7, 'y', 0.7],
  [657, 480, 785, 411, 4, 6, 3, 'o', 0.4], [573, 452, 673, 452, 8, 20, 5, 'y', 0.5], [560, 460, 600, 425, 4, 10, 6, 'y', 0.6], [555, 415, 560, 470, 4, 4, 3, 'y', 0.6], [600, 435, 596, 463, 4, 3, 3, 'y', 0.6],
  [820, 565, 905, 595, 18, 8, 24, 'g', 0.8], [845, 574, 905, 598, 10, 6, 14, 'g', 0.8], [884, 520, 905, 595, 14, 8, 24, 'g', 0.8], [893, 560, 910, 610, 14, 12, 12, 'g', 0.7],
  [785, 571, 880, 598, 6, 10, 5, 'g', 0.45], [788, 548, 905, 597, 30, 6, 9, 'g', 0.5], [799, 496, 885, 575, 8, 20, 7, 'b', 0.5], [799, 496, 839, 503, 4, 4, 4, 'b', 0.5], [839, 506, 890, 570, 8, 14, 8, 'g', 0.5],
  [720, 440, 799, 496, 40, 8, 4, 'b', 0.4], [800, 440, 800, 540, 50, 60, 8, 'x', 0.8], [860, 490, 878, 600, 20, 16, 9, 'x', 0.9], [704, 419, 725, 396, 4, 8, 4, 'b', 0.6],
  [630, 400, 710, 380, 16, 16, 16, 'g', 0.5], [700, 420, 640, 400, 6, 20, 5, 'b', 0.4],
];
const DASHES = ['1 2', '1 3', '2 3', '1 4', '6 7 1 3', '1 2 3 4'];
const GRAPH_EDGES = BUNDLES.flatMap(([x1, y1, x2, y2, s1, s2, n, t, o]) =>
  Array.from({ length: n }, () => ({
    d: `M${(x1 + (rnd() - 0.5) * s1).toFixed(1)} ${(y1 + (rnd() - 0.5) * s1).toFixed(1)}L${(x2 + (rnd() - 0.5) * s2).toFixed(1)} ${(y2 + (rnd() - 0.5) * s2).toFixed(1)}`,
    c: EDGE_TONE[t], o, dash: DASHES[Math.floor(rnd() * DASHES.length)],
  })));
const GRAPH_NODES = [...BACK, ...CORE, ...LOWER, ...FREE];

const Canvas = styled.svg`background: #fff;`;
const GraphCanvas = () => (
  <Canvas width="811" height="497" viewBox="313 176 811 497">
    <g fill="none" strokeWidth=".8">
      {GRAPH_EDGES.map((e, i) => <path key={i} d={e.d} stroke={e.c} opacity={e.o} strokeDasharray={e.dash} />)}
    </g>
    <g strokeWidth=".9">
      {GRAPH_NODES.map(([x, y, r, t], i) => <circle key={i} cx={x} cy={y} r={r} fill={TONES[t][0]} stroke={TONES[t][1]} strokeOpacity={r < 3 ? 0.6 : 0.8} />)}
    </g>
  </Canvas>
);

/* ---------- taskbar icons ---------- */

const TaskIcon = ({ name }) => {
  switch (name) {
    case 'start':
      return <svg width="20" height="20" viewBox="0 0 20 20"><path d="M0 3l8.500-1.200v7.700H0zM9.500 1.600L20 0v9.500H9.500zM0 10.500h8.500v7.700L0 17zM9.500 10.500H20V20L9.500 18.400z" fill="#fff" /></svg>;
    case 'search':
      return <svg width="20" height="20" viewBox="0 0 20 20" fill="none" stroke="#fff" strokeWidth="1.400"><circle cx="13" cy="7" r="6.300" /><path d="M8.500 11.500L.5 19.500" /></svg>;
    case 'tasks':
      return <svg width="21" height="20" viewBox="0 0 21 20" fill="none" stroke="#fff" strokeWidth="1.200"><path d="M1 0v3.500h12V0M1 20v-3.500h12V20M18.500 0v5M18.500 11v9" /><rect x="1" y="5.500" width="12" height="9" /><path d="M17 6.500h3v3h-3z" fill="#fff" stroke="none" /></svg>;
    case 'idm':
      return <svg width="28" height="28" viewBox="0 0 28 28" fill="none"><path d="M2 17A12.500 12.500 0 0 1 9 2.500M26 11A12.500 12.500 0 0 1 19 25.500" stroke="#1e90c4" strokeWidth="1.500" /><path d="M10 1.700A12.800 12.800 0 0 1 26.500 11M18 26.300A12.800 12.800 0 0 1 1.500 17M5 16a9.500 9.500 0 0 1 11-11.500M23 12a9.500 9.500 0 0 1-11 11.500" stroke="#35b2e3" strokeWidth="1.500" /><path d="M11 8h6v5.500h4l-7 8-7-8h4z" fill="#7cc62f" stroke="#3d8614" /></svg>;
    case 'explorer':
      return <svg width="28" height="24" viewBox="0 0 28 24"><path d="M0 0h12l3 3h13v20H0z" fill="#f8cf58" /><path d="M0 0h12l2 3-2 2H0z" fill="#e09d12" /><path d="M5 23V13.500q0-1.500 1.500-1.500h15q1.500 0 1.500 1.500V23h-5v-5H10v5z" fill="#3b96dd" /></svg>;
    case 'sigma':
      return <svg width="32" height="28" viewBox="0 0 32 28"><path d="M2 8l7-6 18 1 2 20-7 4-21-1z" fill="#fff2d9" stroke="#e1caa0" strokeWidth=".6" /><path d="M2 8l7-6 0 6z" fill="#d9d2c4" /><path d="M28 1l3 4-10 10-4-3z" fill="#2464c0" /><path d="M25 0l3 1-10 11-3-1z" fill="#123f8c" /><path d="M15 11l6 5-6 2-5 4 2-5z" fill="#f3a01c" /><path d="M12 20l-2 2" stroke="#111" /><path d="M9 18.500V17H3l3.500 3.800L3 25h6v-2" stroke="#c9221f" strokeWidth="1.700" fill="none" /></svg>;
    case 'chrome':
      return <svg width="27" height="27" viewBox="0 0 27 27"><circle cx="13.500" cy="13.500" r="13.500" fill="#fcc934" /><path d="M13.500 13.500L1.500 7.200A13.500 13.500 0 0 1 25.500 7.500H13.500z" fill="#e33b2e" /><path d="M1.500 7.200A13.500 13.500 0 0 0 12.500 27l6-10.500-9.500 1z" fill="#1fa050" /><path d="M12.500 27l6.500-11.500" stroke="#fcc934" /><circle cx="13.500" cy="13.500" r="6.200" fill="#fff" /><circle cx="13.500" cy="13.500" r="4.900" fill="#4285f4" /></svg>;
    case 'adobe':
      return <svg width="28" height="27" viewBox="0 0 28 27"><rect x=".8" y=".8" width="26.400" height="25.400" fill="#2a0606" stroke="#e2200f" strokeWidth="1.700" /><path d="M12.500 6.500c2-1.500 2.200 2 1 6S7.500 21 6.200 20s5-5 14.500-4.500c2.500.8.500 2.500-2 .5s-6.500-6.500-6.200-9.500z" fill="none" stroke="#e8dede" strokeWidth="1.200" /></svg>;
    case 'putty':
      return <svg width="28" height="29" viewBox="0 0 28 29"><g stroke="#222" strokeWidth=".6"><path d="M13 1l12-1 1 10 2 2v2H14l-1-3z" fill="#d0d0d0" /><path d="M2 16h12v9l3 1v2H0v-2l2-1z" fill="#d0d0d0" /></g><path d="M15 2.500h8.500v7H15zM4 18h8.500v6H4z" fill="#1013dd" /><path d="M19 5L9 15h4L7 22l13-9h-4z" fill="#ffef00" stroke="#555" strokeWidth=".5" /></svg>;
    case 'pc':
      return <svg width="29" height="29" viewBox="0 0 29 29"><path d="M5 1l22 2-2 19L4 19z" fill="#d5d7da" stroke="#888" strokeWidth=".6" /><path d="M7 3.500l17 1.300-1.500 14L7 17z" fill="#163fc6" /><path d="M0 5h24v9H0z" fill="#9fd0f1" stroke="#4f90c8" strokeWidth=".6" /><path d="M1.500 7h21M1.500 9.500h21M1.500 12h21" stroke="#fff" strokeWidth="1.500" strokeDasharray="1.700 .6" /><path d="M13 20l8 1v3H12z" fill="#aaa" /><ellipse cx="16.500" cy="25.500" rx="8.500" ry="3.200" fill="#d9d9d9" /></svg>;
    case 'jupyter':
      return <svg width="24" height="29" viewBox="0 0 24 29"><path d="M2 11Q12-3.500 22 11 12 5 2 11zM2 18Q12 23.500 22 18 12 32 2 18z" fill="#f37726" /><circle cx="19.500" cy="2.700" r="1.700" fill="#858789" /><circle cx="2.500" cy="4.500" r="1.100" fill="#66696b" /><circle cx="4" cy="26.500" r="2.100" fill="#a2a4a6" /></svg>;
    case 'speaker':
      return <svg width="21" height="17" viewBox="0 0 21 17" fill="none" stroke="#fff"><path d="M1 5.500h3.500L8 2v13l-3.500-3.500H1z" /><path d="M11 6.500q1.500 2 0 4M13.500 4.500q3 4 0 8" /><path d="M16 2.500q4.500 6 0 12" stroke="#888" /></svg>;
    default:
      return null;
  }
};
const GephiTile = styled.div`
  width: ${p => p.$s}px;
  height: ${p => p.$s}px;
  background: linear-gradient(#2a2a2a, #000);
  display: flex;
  align-items: center;
  justify-content: center;
`;

/* ---------- data ---------- */

const STATS = [
  ['Статистика по графу', ['Средняя степень', 'Средняя взвешенная степень', 'Диаметр графа', 'Плотность графа', 'HITS', 'Модулярность', 'PageRank', 'Связные компоненты', 'Girvan-Newman Clustering']],
  ['Статистика по узлу', ['Средний коэффициент кластеризации', 'Eigenvector Centrality']],
  ['Статистика по ребру', ['Средняя длина пути']],
  ['Динамика', []],
];
const PROPS = [
  ['Опции поведения'], ['Ослабление хабов', false], ['LinLog режим', false], ['Запрет перекрытия', false], ['Влияние весов ребёр', '1.0'],
  ['Настройки качества'], ['Устойчивость', '1.0'], ['Приближенное отталкивание', true],
];

/* ---------- sections ---------- */

const AppearancePanel = () => (
  <Panel $h={230}>
    <TabStrip>
      <Tab $on $w={91}><ArialText $bold $size={11} $ls={0.25}>Appearance</ArialText><Close /></Tab>
      <Tab $w={119}><ArialText $bold $size={11} $ls={0.2}>Редактирование</ArialText></Tab>
      <MinButton />
    </TabStrip>
    <ToolRow $h={26}>
      <Chip $on><Text>Nodes</Text></Chip>
      <Chip><Text>Edges</Text></Chip>
      <VLine />
      <Grow />
      <Chip $on $w={24}><Palette /></Chip>
      <Chip $w={24}><Rings /></Chip>
      <Chip $w={24}><LetterBar $bar="3px solid #999" $size={16}>A</LetterBar></Chip>
      <Chip $w={24}><SizeT /></Chip>
    </ToolRow>
    <ToolRow $h={24} $pad="0">
      <Chip><Text>Unique</Text></Chip>
      <Chip><Text>Partition</Text></Chip>
      <Chip $on><Text>Ranking</Text></Chip>
    </ToolRow>
    <Select $h={22} $m="4px 4px 0"><Text $ls={0.35}>close_cent</Text><Chevron w={11} sw={1} /></Select>
    <RankingArea>
      <ColorLabel>Color:</ColorLabel>
      <GradientBar />
      <Grow />
      <Dice />
    </RankingArea>
    <SplineRow><Text $color="#1a1aff">Сплайны...</Text><VLine /></SplineRow>
    <ApplyRow>
      <Chain />
      <PushButton $w={115} $h={19}><Play /><Text>Применить</Text></PushButton>
    </ApplyRow>
  </Panel>
);

const LayoutPanel = () => (
  <Panel $h={343} $active>
    <TabStrip>
      <Tab $on $focus $w={70}><ArialText $bold $size={11}>Укладка</ArialText><Close /></Tab>
      <MinButton />
    </TabStrip>
    <Select $h={32} $m="5px 5px 0"><Text $ls={0.4}>ForceAtlas 2</Text><Chevron w={11} sw={1} /></Select>
    <RunRow>
      <Info />
      <PushButton $w={71} $h={23} $focus><Play /><Text>Пуск</Text></PushButton>
    </RunRow>
    <PropSheet>
      <PropRows>
        {PROPS.map(([name, value]) => value === undefined
          ? <PropHead key={name}><Collapse /><ArialText $size={11} $ls={-0.05}>{name}</ArialText></PropHead>
          : (
            <PropRow key={name}>
              <PropCell><ArialText $size={11}>{name}</ArialText></PropCell>
              <PropCell $value>
                {typeof value === 'string'
                  ? <Text>{value}</Text>
                  : <Check>{value && <svg width="14" height="14" viewBox="0 0 14 14"><path d="M2 7l3.500 3.500L12 3" fill="none" stroke="#333" strokeWidth="1.400" /></svg>}</Check>}
              </PropCell>
            </PropRow>
          ))}
      </PropRows>
      <VScroll $w={21} $pad="5px 1px 6px"><Chevron dir="up" /><Thumb $h={48} $mt={6} /><Chevron /></VScroll>
    </PropSheet>
    <Description><ArialText $bold $size={12} $ls={0.5}>ForceAtlas 2</ArialText><HelpDot>?</HelpDot></Description>
    <FooterLinks>
      <CornerMark />
      <Text $ls={0.1}>Предустановки...</Text>
      <Text $ls={0.15}>Сбросить настройки</Text>
    </FooterLinks>
  </Panel>
);

const GraphPanel = () => (
  <div>
    <GraphTabs>
      <GraphTab><Text>Граф</Text><Close /></GraphTab>
      <GraphTabRest><NavArrows /></GraphTabRest>
    </GraphTabs>
    <GraphFrame>
      <GraphTop>
        <LogoTile><GephiMark /></LogoTile>
        <Gap $w={4} />
        <Text $size={10} $ls={-0.13}>Выделение мышью</Text>
        <Gap $w={6} />
        <Text $size={10} $ls={0.15} $color="#1a1ae0">(Configure)</Text>
        <Gap $w={25} />
        <VLine $h={23} />
      </GraphTop>
      <GraphMiddle>
        <Tools>
          <Tool $on><CursorIcon /></Tool>
          <Tool><Marquee /></Tool>
          <Tool><Hand /></Tool>
          <ToolRule />
          <Tool><Stroke body="#333" tip="#8a7a60" w={2.4} /></Tool>
          <Tool><Diamond /></Tool>
          <Tool><Bucket /></Tool>
          <Tool><Stroke body="#3c3c3c" tip="#444" /></Tool>
          <Tool><Stroke body="#f2e600" tip="#f2e600" w={2.2} /></Tool>
          <Tool><Plane /></Tool>
          <Tool><Gear /></Tool>
          <Tool $on><CursorIcon help /></Tool>
          <Grow />
          <Tool><ZoomFit /></Tool>
          <Tool><SquareIcon /></Tool>
          <Tool><LetterBar $bar="3px solid #ff4f86" $w={15} $size={12} $lh={12} $font='"Liberation Serif", serif'>A</LetterBar></Tool>
          <Tool><LetterA $c="#333" $shade $size={12}>A</LetterA></Tool>
        </Tools>
        <GraphCanvas />
      </GraphMiddle>
      <BottomTools>
        <VLine /><Gap $w={9} />
        <Bulb /><Gap $w={9} />
        <Camera /><Gap $w={5} /><Caret w={5} /><Gap $w={5} />
        <VLine /><Gap $w={7} />
        <Slab /><Gap $w={7} />
        <VLine /><Gap $w={3} />
        <Chip $on $w={23} $h={22}><EdgeIcon /></Chip>
        <Chip $on $w={23} $h={22}><EdgeIcon rainbow /></Chip>
        <Gap $w={4} /><Slab hollow /><Gap $w={10} />
        <Slider $w={90}><Knob $at={13} /></Slider><Gap $w={7} />
        <VLine /><Gap $w={7} />
        <LetterA $c="#333">A</LetterA><Gap $w={1} /><Caret w={3} /><Gap $w={8} />
        <LetterA $c="#3b66c8" $u>A</LetterA><Gap $w={2} /><Caret w={3} /><Gap $w={8} />
        <Text $ls={0.22}>Arial Полужирный, 32</Text><Gap $w={8} />
        <Slider $w={90}><Knob $at={41} /></Slider><Gap $w={5} />
        <Swatch /><Gap $w={3} /><Clipboard />
        <Grow />
        <Eject />
      </BottomTools>
    </GraphFrame>
  </div>
);

const RightColumn = () => (
  <Column>
    <Panel $h={64}>
      <TabStrip>
        <Tab $on $w={75}><ArialText $bold $size={11} $ls={0.2}>Контекст</ArialText><Close /></Tab>
        <MinButton $right={11} />
      </TabStrip>
      <ContextBody>
        <ContextRow $cut><Text $bold>Узлы:</Text><Text>1935</Text></ContextRow>
        <ContextRow><Text $bold>Рёбра:</Text><Text>18767</Text></ContextRow>
        <ContextTail><Text>Ненаправленный граф</Text></ContextTail>
      </ContextBody>
    </Panel>
    <Panel $h={509}>
      <TabStrip>
        <Tab $w={75}><ArialText $bold $size={11}>Фильтры</ArialText></Tab>
        <Tab $on $w={88}><ArialText $bold $size={11} $ls={-0.1}>Статистики</ArialText><Close /></Tab>
        <MinButton $right={11} />
      </TabStrip>
      <ToolRow $h={25} $pad="2px 0 0 3px"><Text $ls={0}>Настройки</Text></ToolRow>
      <StatsBody>
        <StatList>
          {STATS.map(([head, items]) => (
            <React.Fragment key={head}>
              <StatHead><Toggle /><Text $bold $ls={0.42}>{head}</Text></StatHead>
              {items.map(i => <StatItem key={i}><Text $ls={0.25}>{i}</Text></StatItem>)}
            </React.Fragment>
          ))}
        </StatList>
        <VScroll $w={18} $pad="6px 0 6px"><Chevron dir="up" /><Thumb $h={317} $mt={5} /><Chevron /></VScroll>
        <HScroll><Chevron dir="left" /><HThumb /><Chevron dir="right" /></HScroll>
      </StatsBody>
    </Panel>
  </Column>
);

const TASKS = [
  ['start', 60], ['search', 60], ['tasks', 60], ['idm', 67, '', 4], ['explorer', 51, 'stack'], ['sigma', 51, '', 12], ['chrome', 51, 'run', 11],
  ['adobe', 51, 'run', 11], ['putty', 51, 'run', 11], ['pc', 51, 'run', 11], ['jupyter', 51, 'run', 6],
];

export default function App() {
  return (
    <Desktop>
      <Global />
      <Window>
        <TitleBar>
          <GephiTile $s={16}><GephiMark size={15} c="#fff" w={1.1} /></GephiTile>
          <SegoeText $size={14} $ls={0.03}>Gephi 0.9.2 - Project 1</SegoeText>
          <Grow />
          <Controls>
            <svg width="12" height="12"><path d="M0 5.500h12" stroke="#000" /></svg>
            <svg width="12" height="12"><rect x=".5" y=".5" width="11" height="11" fill="none" stroke="#000" /></svg>
            <Close s={12} c="#000" w={0.8} />
          </Controls>
        </TitleBar>
        <MenuBar>
          {['Файл', 'Рабочая область', 'Вид', 'Сервис', 'Окно', 'Справка'].map(m => <SegoeText key={m} $size={14} $ls={0.14}>{m}</SegoeText>)}
        </MenuBar>
        <Banner>
          <ModeButton $on><Globe /><Text>Обработка</Text></ModeButton>
          <ModeButton><TableIcon /><Text>Лаборатория данных</Text></ModeButton>
          <ModeButton><MonitorIcon /><Text>Просмотр</Text></ModeButton>
          <Grow />
          <LogoBox><BigLogo /></LogoBox>
        </Banner>
        <WorkspaceTabs>
          <WorkspaceTab><PageIcon /><Text $ls={0.3}>Рабочая область 1</Text><Grow /><Close s={9} /></WorkspaceTab>
          <Grow />
          <NavArrows wide />
        </WorkspaceTabs>
        <Body>
          <Column><AppearancePanel /><LayoutPanel /></Column>
          <GraphPanel />
          <RightColumn />
        </Body>
        <StatusBar><Globe s={14} /></StatusBar>
      </Window>
      <Taskbar>
        {TASKS.map(([name, w, mode, mr]) => (
          <React.Fragment key={name}>
            <TaskItem $w={w} $run={mode === 'run' || mode === 'stack'} $mr={mr}><TaskIcon name={name} /></TaskItem>
            {mode === 'stack' && <StackEdge />}
          </React.Fragment>
        ))}
        <TaskItem $w={61} $on $run><GephiTile $s={30}><GephiMark size={28} c="#eee" w={0.9} /></GephiTile></TaskItem>
        <Grow />
        <TaskItem $w={30}><svg width="17" height="9" viewBox="0 0 17 9"><path d="M.5 8.500l8-8 8 8" fill="none" stroke="#fff" strokeWidth="1.200" /></svg></TaskItem>
        <Gap $w={13} />
        <TaskItem $w={24}><TaskIcon name="speaker" /></TaskItem>
        <Gap $w={14} />
        <TaskItem $w={32}><SegoeText $size={13.5} $color="#fff">ENG</SegoeText></TaskItem>
        <Gap $w={13} />
        <Clock><SegoeText $size={13.5} $color="#fff">23:18</SegoeText><SegoeText $size={13.5} $color="#fff">10.11.2019</SegoeText></Clock>
        <Gap $w={20} />
        <Bell>
          <svg width="20" height="22" viewBox="0 0 20 22"><path d="M0 1h20v16h-9l-4 4v-4H0z" fill="#fff" /><path d="M4 5.500h12M4 9h12M4 12.500h8" stroke="#333" /></svg>
          <Badge><SegoeText $size={13} $bold $color="#fff">4</SegoeText></Badge>
        </Bell>
        <Gap $w={13} />
        <VLine $h={50} />
        <Gap $w={4} />
      </Taskbar>
    </Desktop>
  );
}
